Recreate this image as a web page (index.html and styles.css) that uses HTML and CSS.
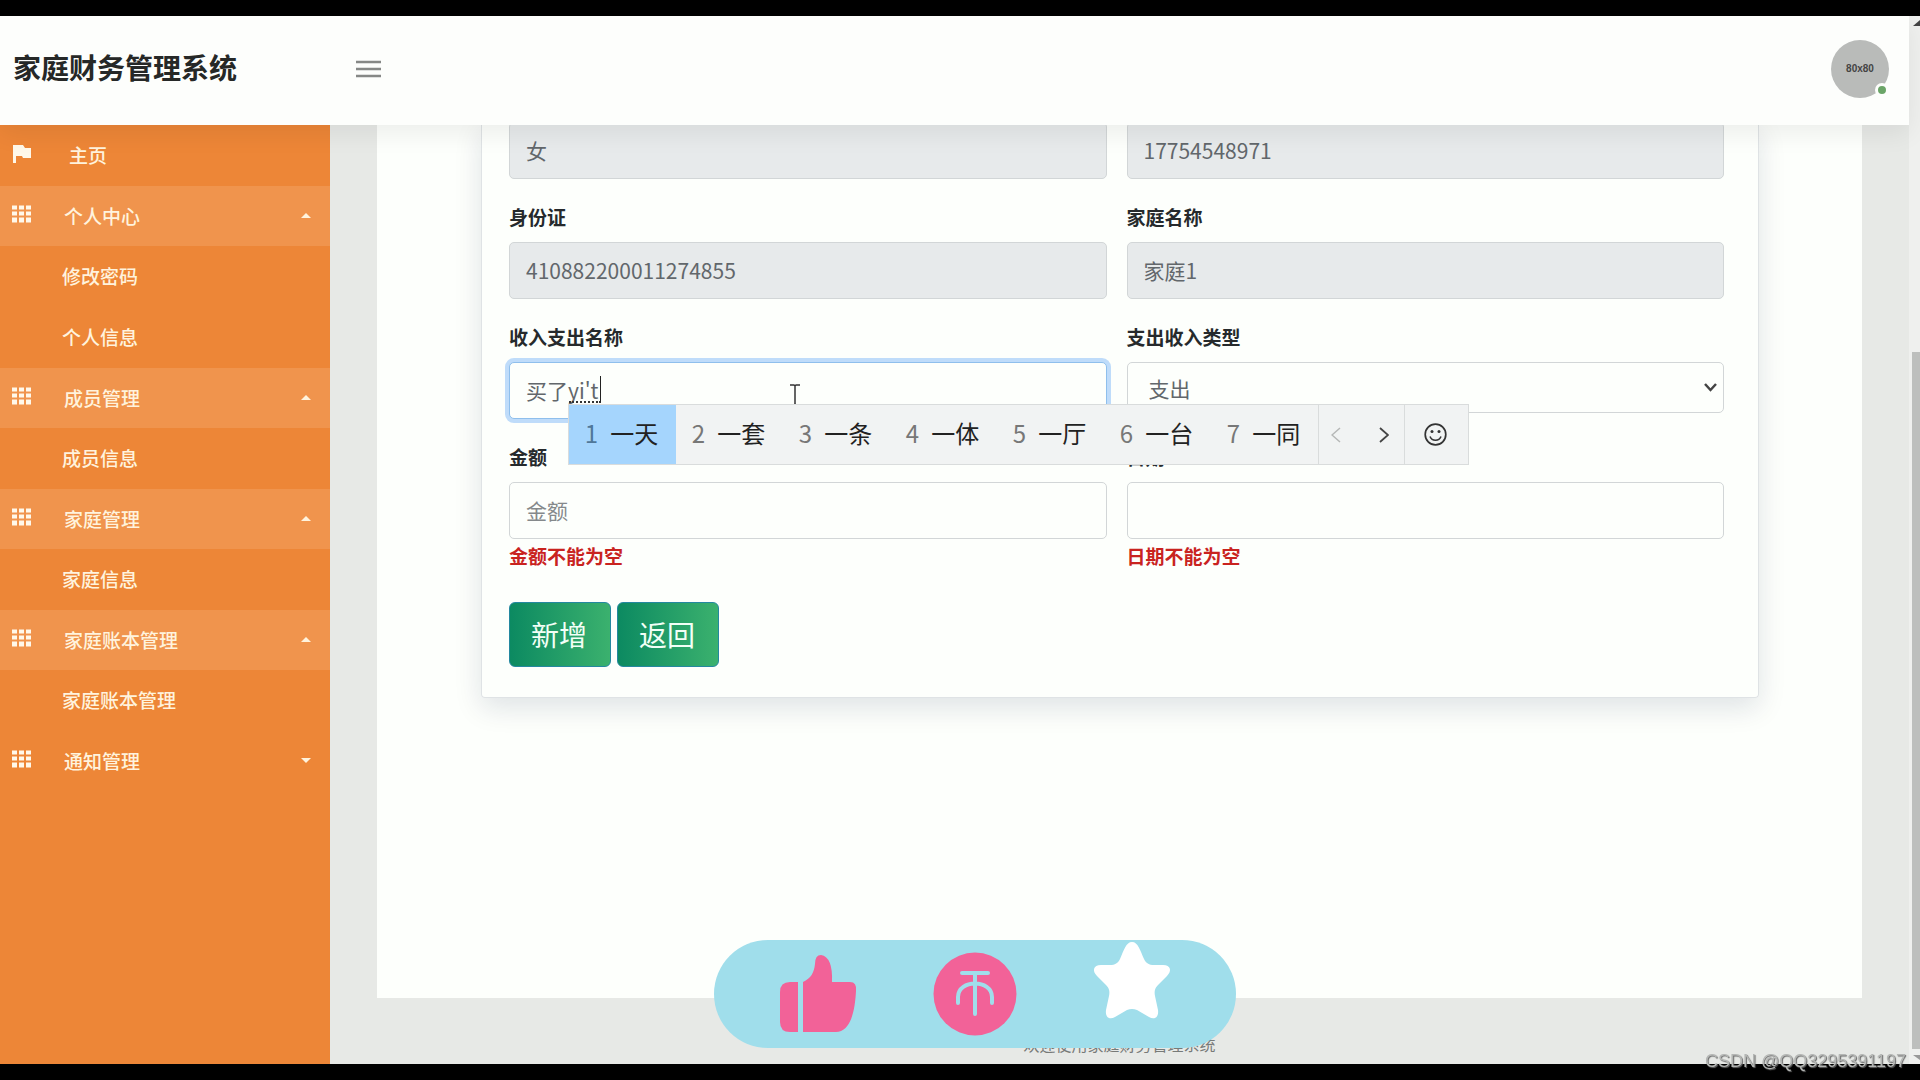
FILE: index.html
```html
<!DOCTYPE html>
<html lang="zh-CN">
<head>
<meta charset="utf-8">
<title>家庭财务管理系统</title>
<link rel="stylesheet" href="styles.css">
</head>
<body>
<svg width="0" height="0" class="sprite" aria-hidden="true">
  <symbol id="grid" viewBox="0 0 19 17">
    <path d="M0 0h5v4H0zM7 0h5v4H7zM14 0h5v4h-5zM0 6h5v4H0zM7 6h5v4H7zM14 6h5v4h-5zM0 12h5v5H0zM7 12h5v5H7zM14 12h5v5h-5z"/>
  </symbol>
</svg>
<div class="app">
  <div class="screen">
    <header class="topbar">
      <h1 class="brand">家庭财务管理系统</h1>
      <button class="burger" type="button" aria-label="菜单">
        <svg width="25" height="18" viewBox="0 0 25 18"><path d="M0 2h25M0 9h25M0 16h25" stroke="#868886" stroke-width="2.500"/></svg>
      </button>
      <div class="avatar">80x80<span class="status"></span></div>
    </header>
    <div class="body">
      <nav class="sidebar">
        <a class="item home" href="#">
          <svg class="icon" viewBox="0 0 19 18"><path d="M1 0h10l2 3h6v10h-8l-1-2H4v7H1z"/></svg>
          <span>主页</span>
        </a>
        <a class="item open" href="#"><svg class="icon"><use href="#grid"/></svg><span>个人中心</span><i class="caret"></i></a>
        <a class="sub" href="#">修改密码</a>
        <a class="sub" href="#">个人信息</a>
        <a class="item open" href="#"><svg class="icon"><use href="#grid"/></svg><span>成员管理</span><i class="caret"></i></a>
        <a class="sub" href="#">成员信息</a>
        <a class="item open" href="#"><svg class="icon"><use href="#grid"/></svg><span>家庭管理</span><i class="caret"></i></a>
        <a class="sub" href="#">家庭信息</a>
        <a class="item open" href="#"><svg class="icon"><use href="#grid"/></svg><span>家庭账本管理</span><i class="caret"></i></a>
        <a class="sub" href="#">家庭账本管理</a>
        <a class="item" href="#"><svg class="icon"><use href="#grid"/></svg><span>通知管理</span><i class="caret down"></i></a>
      </nav>
      <main class="content">
        <div class="panel">
          <form class="card">
            <div class="fields">
              <div class="field"><input class="control" value="女" aria-label="性别" readonly></div>
              <div class="field"><input class="control" value="17754548971" aria-label="手机" readonly></div>
              <div class="field"><label for="idno">身份证</label><input class="control" id="idno" value="410882200011274855" readonly></div>
              <div class="field"><label for="family">家庭名称</label><input class="control" id="family" value="家庭1" readonly></div>
              <div class="field">
                <label for="name">收入支出名称</label>
                <div class="compose">
                  <input class="control active" id="name" value="买了yi't">
                  <span class="marks"></span>
                  <svg class="ibeam" width="10" height="22" viewBox="0 0 10 22"><path d="M0 1h4l1 1 1-1h4M5 2v18M0 21h4l1-1 1 1h4" fill="none" stroke="#333" stroke-width="1.5"/></svg>
                  <div class="ime">
                    <ol class="words">
                      <li class="picked"><b>1</b>一天</li><li><b>2</b>一套</li><li><b>3</b>一条</li><li><b>4</b>一体</li><li><b>5</b>一厅</li><li><b>6</b>一台</li><li><b>7</b>一同</li>
                    </ol>
                    <div class="pager">
                      <svg width="10" height="16" viewBox="0 0 10 16"><path d="M9 1L1 8l8 7" fill="none" stroke="#b5b7b6" stroke-width="1.5"/></svg>
                      <svg width="10" height="16" viewBox="0 0 10 16"><path d="M1 1l8 7-8 7" fill="none" stroke="#444" stroke-width="1.8"/></svg>
                    </div>
                    <div class="smile">
                      <svg width="23" height="23" viewBox="0 0 23 23"><circle cx="11.500" cy="11.500" r="10.300" fill="none" stroke="#333" stroke-width="1.700"/><circle cx="8" cy="8.500" r="1.500" fill="#333"/><circle cx="15" cy="8.500" r="1.500" fill="#333"/><path d="M6 13.500c2 5 9 5 11 0" fill="none" stroke="#333" stroke-width="1.600"/></svg>
                    </div>
                  </div>
                </div>
              </div>
              <div class="field">
                <label for="kind">支出收入类型</label>
                <div class="pick">
                  <select class="control" id="kind"><option>支出</option><option>收入</option></select>
                  <svg class="chevron" width="13" height="9" viewBox="0 0 13 9"><path d="M1 1l5.500 6L12 1" fill="none" stroke="#444" stroke-width="2.500"/></svg>
                </div>
              </div>
              <div class="field"><label for="amount">金额</label><input class="control" id="amount" placeholder="金额"><p class="error">金额不能为空</p></div>
              <div class="field"><label for="date">日期</label><input class="control" id="date"><p class="error">日期不能为空</p></div>
            </div>
            <div class="actions">
              <button class="btn" type="button">新增</button>
              <button class="btn" type="button">返回</button>
            </div>
          </form>
        </div>
        <footer class="footer">欢迎使用家庭财务管理系统</footer>
      </main>
    </div>
  </div>
  <div class="scrollbar"><i class="arrow"></i><div class="thumb"></div><i class="arrow end"></i></div>
</div>
<div class="reactions">
  <svg width="522" height="108" viewBox="0 0 522 108">
    <g fill="#f26298">
      <path d="M84 42v50H76q-10 0-10-10V52q0-10 10-10z"/>
      <path d="M89 42C97 38 100 33 101 24Q101 15 107 15Q119 17 118 42H136Q143 42 142 51C141 70 137 92 122 92H89z"/>
      <circle cx="261" cy="54" r="41.500"/>
    </g>
    <path d="M248 33h26M261 33v41M244 63V57C244 39 278 39 278 57v6" fill="none" stroke="#a0deeb" stroke-width="4" stroke-linecap="round"/>
    <path d="M418 2C424 2 426 10 430 19C432 23 435 25 440 25H449C457 25 458 31 453 36L444 45C441 48 440 51 441 56L444 70C445 78 440 80 435 77L423 70Q418 68 413 70L401 77C396 80 391 78 392 70L395 56C396 51 395 48 392 45L383 36C378 31 379 25 387 25H396C401 25 404 23 406 19C410 10 412 2 418 2Z" fill="#fff"/>
  </svg>
</div>
<div class="watermark">CSDN @QQ3295391197</div>
</body>
</html>
```
FILE: styles.css
```css
* { box-sizing: border-box; }

body {
  margin: 0;
  background: #000;
  font-family: "Noto Sans CJK SC", sans-serif;
  overflow: hidden;
}

a { color: inherit; text-decoration: none; }
button, input, select { font: inherit; }
.sprite { position: absolute; }

.app {
  display: flex;
  height: 100vh;
  border: solid #000;
  border-width: 16px 0;
  background: #fdfffc;
}

.screen {
  flex: 1;
  min-width: 0;
  display: flex;
  flex-direction: column;
}

/* Top bar */
.topbar {
  position: relative;
  z-index: 2;
  flex: none;
  height: 109px;
  display: flex;
  align-items: center;
  padding: 0 20px 4px 13px;
  background: #fdfefc;
  box-shadow: 0 8px 24px rgba(0, 0, 0, 0.07);
}

.brand {
  width: 343px;
  margin: 0;
  padding-bottom: 4px;
  font-size: 28px;
  line-height: 40px;
  font-weight: 700;
  color: #262827;
}

.burger {
  display: flex;
  padding: 0;
  border: 0;
  background: none;
}

.avatar {
  position: relative;
  display: grid;
  place-items: center;
  width: 58px;
  height: 58px;
  margin-left: auto;
  border-radius: 50%;
  background: #b9bbb9;
  color: #444;
  font: 700 10px "Liberation Sans", sans-serif;
}

.status {
  position: absolute;
  right: 0;
  bottom: 1px;
  width: 14px;
  height: 14px;
  border: 3px solid #fdfefc;
  border-radius: 50%;
  background: #6ba568;
}

.body {
  flex: 1;
  min-height: 0;
  display: flex;
}

/* Side navigation */
.sidebar {
  flex: none;
  width: 330px;
  background: #ed8637;
  color: #fff3dd;
  font-size: 19px;
  font-weight: 500;
  box-shadow: 0 0 24px rgba(0, 0, 0, 0.08);
}

.item {
  display: flex;
  align-items: center;
  height: 60px;
  padding: 0 19px 2px 12px;
}

.item.home { height: 61px; }
.item.home .icon { margin-right: 38px; }
.item.open { background: #f0944d; }

.icon {
  width: 19px;
  height: 18px;
  margin: 0 33px 2px 0;
  fill: #fff8ea;
}

.sub {
  display: flex;
  align-items: center;
  height: 61px;
  padding: 0 0 3px 62px;
}

.caret {
  margin-left: auto;
  border: 5px solid transparent;
  border-top: 0;
  border-bottom-color: #fff3dd;
}

.caret.down {
  border-top: 5px solid #fff3dd;
  border-bottom: 0;
}

/* Form area */
.content {
  flex: 1;
  min-width: 0;
  display: flex;
  flex-direction: column;
  padding: 0 47px;
  overflow: hidden;
  background: #e7e9e6;
}

.panel {
  flex: 1;
  padding: 0 103px 0 104px;
  background: #fdfffc;
}

.card {
  margin-top: -3px;
  padding: 0 34px 30px 27px;
  border: 1px solid #dfe3e5;
  border-top: 0;
  border-radius: 0 0 4px 4px;
  box-shadow: 0 10px 28px rgba(8, 21, 66, 0.12);
}

.fields {
  display: grid;
  grid-template-columns: 1fr 1fr;
  gap: 25px 20px;
}

.field label {
  display: block;
  margin-bottom: 12px;
  font-size: 19px;
  line-height: 26px;
  font-weight: 700;
  color: #262a2c;
}

.control {
  display: block;
  width: 100%;
  height: 57px;
  padding: 0 16px 2px;
  border: 1px solid #d2d6d7;
  border-radius: 5px;
  background: #fdfffc;
  color: #62676b;
  font-size: 21px;
  outline: 0;
}

.control:read-only:not(select) { background: #e7eaeb; }
.control::placeholder { color: #85898b; opacity: 1; }

.control.active {
  border-color: #8fbfec;
  box-shadow: 0 0 0 4px #bfdcfa;
}

.compose, .pick { position: relative; }

select.control {
  height: 51px;
  padding: 0 21px;
  appearance: none;
}

.chevron {
  position: absolute;
  right: 7px;
  top: 21px;
}

.marks {
  position: absolute;
  left: 60px;
  top: 14px;
  width: 32px;
  height: 27px;
  border-right: 1px solid #222;
  border-bottom: 2px dotted #333;
}

.ibeam {
  position: absolute;
  left: 281px;
  top: 22px;
}

/* Input method candidate bar */
.ime {
  position: absolute;
  z-index: 1;
  left: 59px;
  top: 42px;
  display: flex;
  height: 61px;
  border: 1px solid #d9dcdc;
  background: #f1f3f3;
  color: #222;
  font-size: 24px;
}

.words {
  display: flex;
  margin: 0;
  padding: 0;
  list-style: none;
}

.words li {
  display: flex;
  align-items: center;
  justify-content: center;
  gap: 12px;
  width: 107px;
  padding: 0 2px 4px 0;
  white-space: nowrap;
}

.words b { font-weight: 400; color: #777; }
.words .picked { background: #a5d5fd; }
.words .picked b { color: #4f7799; }

.pager, .smile {
  display: flex;
  align-items: center;
  justify-content: center;
  border-left: 1px solid #d9dcdc;
}

.pager { width: 86px; gap: 38px; padding-right: 4px; }
.smile { width: 64px; padding-right: 2px; }

.error {
  margin: 3px 0 1px;
  font-size: 19px;
  line-height: 28px;
  font-weight: 700;
  color: #c9231f;
}

.actions {
  display: flex;
  gap: 6px;
  margin-top: 31px;
}

.btn {
  width: 102px;
  height: 65px;
  padding: 0 2px 2px 0;
  border: 1px solid #2488a0;
  border-radius: 6px;
  background: linear-gradient(90deg, #0c8a61, #3bb16e);
  color: #f2fff6;
  font-size: 28px;
}

.footer {
  flex: none;
  height: 66px;
  padding-top: 34px;
  text-align: center;
  font-size: 16px;
  line-height: 24px;
  color: #777a78;
}

/* Window scroll bar */
.scrollbar {
  flex: none;
  width: 11px;
  display: flex;
  flex-direction: column;
  padding-left: 3px;
  overflow: hidden;
  background: #eff0ee;
}

.arrow {
  margin: 4px 0 0 1px;
  width: 14px;
  border: 7px solid transparent;
  border-top: 0;
  border-bottom: 6px solid #444;
}

.arrow.end {
  margin: 6px 0 4px 1px;
  border-top: 5px solid #999;
  border-bottom: 0;
}

.thumb {
  flex: 1;
  margin-top: 326px;
  background: #bdbfbd;
}

/* Floating layers */
.reactions {
  position: fixed;
  left: 50%;
  bottom: 32px;
  margin-left: -246px;
  height: 108px;
  border-radius: 54px;
  background: #a0deeb;
}

.watermark {
  position: fixed;
  right: 14px;
  bottom: 8px;
  font: 18px "Liberation Sans", sans-serif;
  color: #b4b6b4;
  text-shadow: 1px 1px 1px #666;
}
```
